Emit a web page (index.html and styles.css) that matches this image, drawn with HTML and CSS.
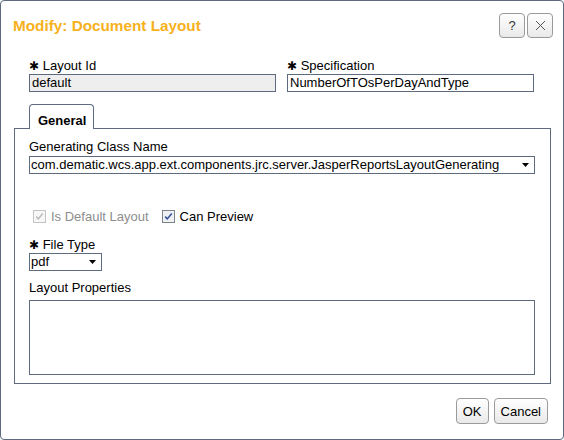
FILE: index.html
```html
<!DOCTYPE html>
<html>
<head>
<meta charset="utf-8">
<link rel="stylesheet" href="styles.css">
</head>
<body>
<div class="dialog">
  <div class="header">
    <div class="title">Modify: Document Layout</div>
    <div class="tools">
      <div class="btn tool">?</div>
      <div class="btn tool"><svg width="11" height="11" viewBox="0 0 11 11"><path d="M1 1 L10 10 M10 1 L1 10" stroke="#555" stroke-width="1" fill="none"/></svg></div>
    </div>
  </div>

  <div class="fields">
    <div class="field">
      <div class="label"><span class="req">✱</span> Layout Id</div>
      <div class="box readonly">default</div>
    </div>
    <div class="field">
      <div class="label"><span class="req">✱</span> Specification</div>
      <div class="box">NumberOfTOsPerDayAndType</div>
    </div>
  </div>

  <div class="tabs">
    <div class="tabbar"><div class="tab">General</div></div>
    <div class="panel">
      <div class="label">Generating Class Name</div>
      <div class="box select">
        <span class="val">com.dematic.wcs.app.ext.components.jrc.server.JasperReportsLayoutGenerating</span>
        <svg class="arrow" width="7" height="4" viewBox="0 0 7 4"><path d="M0 0 H7 L3.5 4 Z" fill="#000"/></svg>
      </div>

      <div class="checks">
        <div class="check disabled">
          <svg width="13" height="13" viewBox="0 0 13 13"><rect x="0.5" y="0.5" width="12" height="12" fill="#f7f7f7" stroke="#c4c4c4"/><path d="M3.2 6.6 L5.3 8.9 L9.8 3.6" fill="none" stroke="#b9b9b9" stroke-width="1.5"/></svg>
          <span>Is Default Layout</span>
        </div>
        <div class="check">
          <svg width="13" height="13" viewBox="0 0 13 13"><rect x="0.5" y="0.5" width="12" height="12" fill="#eef0f4" stroke="#7e8389"/><path d="M3.2 6.6 L5.3 8.9 L9.8 3.6" fill="none" stroke="#35509a" stroke-width="1.6"/></svg>
          <span>Can Preview</span>
        </div>
      </div>

      <div class="label ft"><span class="req">✱</span> File Type</div>
      <div class="box select small">
        <span class="val">pdf</span>
        <svg class="arrow" width="7" height="4" viewBox="0 0 7 4"><path d="M0 0 H7 L3.5 4 Z" fill="#000"/></svg>
      </div>

      <div class="label lp">Layout Properties</div>
      <div class="box area"></div>
    </div>
  </div>

  <div class="footer">
    <div class="btn ok">OK</div>
    <div class="btn">Cancel</div>
  </div>
</div>
</body>
</html>
```

FILE: styles.css
```css
* { box-sizing: border-box; }
html, body { margin: 0; padding: 0; background: #fff; }
body {
  font-family: "Liberation Sans", Arial, sans-serif;
  font-size: 13px;
  line-height: 15px;
  color: #000;
}
.dialog {
  width: 564px;
  height: 440px;
  border: 1px solid #5e6a7f;
  border-radius: 4px;
  display: flex;
  flex-direction: column;
}
.header {
  display: flex;
  justify-content: space-between;
  align-items: flex-start;
  padding: 12px 10px 0 12px;
}
.title {
  margin-top: 4px;
  font-weight: bold;
  font-size: 15.3px;
  line-height: 17px;
  color: #f6b11c;
}
.tools { display: flex; gap: 2px; }
.btn {
  display: flex;
  align-items: center;
  justify-content: center;
  height: 26px;
  padding: 0 6px;
  border: 1px solid #9a9a9a;
  border-radius: 4px;
  background: linear-gradient(#ffffff, #e9e9e9);
  color: #000;
}
.tool { width: 26px; height: 25px; padding: 0; color: #333; }
.fields {
  display: flex;
  gap: 11px;
  margin: 20px 0 0 28px;
}
.field { width: 247px; }
.label { height: 15px; margin-bottom: 1px; white-space: nowrap; }
.req { font-family: "DejaVu Sans", sans-serif; font-size: 12px; }
.box {
  height: 18px;
  border: 1px solid #5e6a7f;
  padding: 0 2px;
  line-height: 16px;
  white-space: nowrap;
  overflow: hidden;
}
.readonly { background: #eeeeee; }
.tabs { margin: 12px 12px 0 13px; }
.tabbar { display: flex; padding-left: 15px; }
.tab {
  position: relative;
  z-index: 1;
  margin-bottom: -1px;
  padding: 8px 7px 1px 8px;
  border: 1px solid #5e6a7f;
  border-bottom: none;
  border-radius: 4px 4px 0 0;
  background: #fff;
  font-weight: bold;
}
.panel {
  border: 1px solid #5e6a7f;
  padding: 10px 15px 8px 14px;
}
.panel > .label:first-child { margin-bottom: 2px; }
.select {
  display: flex;
  align-items: center;
  justify-content: space-between;
  padding: 0 5px 0 1px;
}
.select.small { width: 73px; }
.checks {
  display: flex;
  gap: 13px;
  margin: 35px 0 0 4px;
  height: 15px;
}
.check { display: flex; align-items: center; gap: 5px; }
.check svg { display: block; }
.check.disabled { color: #8d8d8d; }
.ft { margin-top: 13px; }
.lp { margin-top: 9px; margin-bottom: 5px; }
.area { height: 75px; }
.footer {
  display: flex;
  justify-content: flex-end;
  gap: 5px;
  margin-top: 14px;
  padding-right: 15px;
}
.ok { width: 33px; }
```
